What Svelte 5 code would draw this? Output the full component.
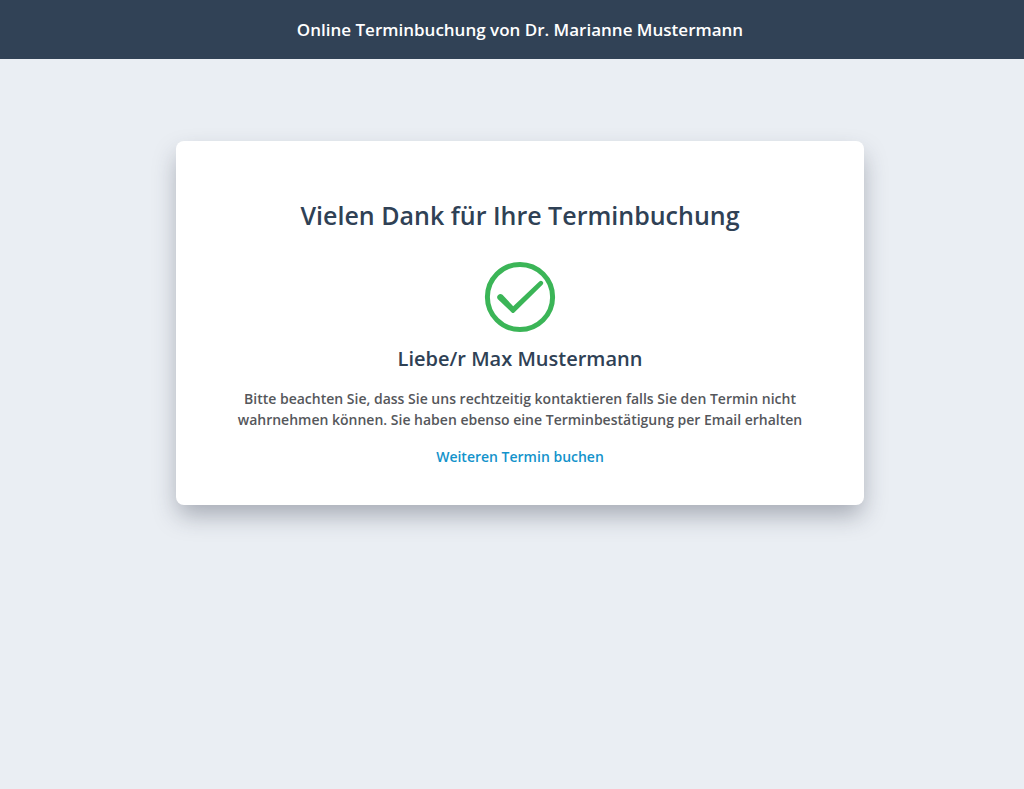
<script>
  const doctor = 'Dr. Marianne Mustermann';
  const patient = 'Max Mustermann';
</script>

<div class="page">
  <header><p>Online Terminbuchung von {doctor}</p></header>
  <main>
    <section class="card">
      <h1>Vielen Dank für Ihre Terminbuchung</h1>
      <svg class="check" viewBox="0 0 72 72" aria-hidden="true">
        <circle cx="36" cy="36" r="32.600" />
        <path d="M13.900 38.200a3.200 3.200 0 0 1 4.600-4.400L29.200 45.300 55.300 20.400a2.300 2.300 0 0 1 3.200 3.300L30.300 51.400a1.800 1.800 0 0 1-2.600 0Z" />
      </svg>
      <h2>Liebe/r {patient}</h2>
      <p class="note">Bitte beachten Sie, dass Sie uns rechtzeitig kontaktieren falls Sie den Termin nicht wahrnehmen können. Sie haben ebenso eine Terminbestätigung per Email erhalten</p>
      <a href="#buchen">Weiteren Termin buchen</a>
    </section>
  </main>
</div>

<style>
  :global(body) { margin: 0; background: #eaeef3; }
  .page {
    min-height: 100vh;
    background: #eaeef3;
    font-family: "Open Sans", sans-serif;
    font-weight: 600;
    color: #2f4155;
  }
  header {
    padding: 16px 16px 16px 32px;
    background: #314256;
    color: #fff;
    text-align: center;
  }
  header p { margin: 0; font-size: 17px; line-height: 27px; }
  main { padding: 82px 160px 40px 176px; }
  .card {
    display: flex;
    flex-direction: column;
    align-items: center;
    padding: 56px 56px 38px;
    border-radius: 8px;
    background: #fff;
    box-shadow: 0 12px 24px -2px rgba(45, 50, 70, 0.36);
    text-align: center;
  }
  h1, h2, p { font-weight: 600; margin: 0; }
  h1 { font-size: 25px; line-height: 36px; }
  .check { width: 72px; height: 72px; margin: 28px 0 12px; }
  .check circle { fill: none; stroke: #3bb557; stroke-width: 5; }
  .check path { fill: #3bb557; }
  h2 { font-size: 20px; line-height: 28px; }
  .note { margin: 15px 0 16px; color: #55575b; font-size: 14px; line-height: 21px; }
  a { color: #1393cb; font-size: 14px; line-height: 21px; text-decoration: none; }
</style>
